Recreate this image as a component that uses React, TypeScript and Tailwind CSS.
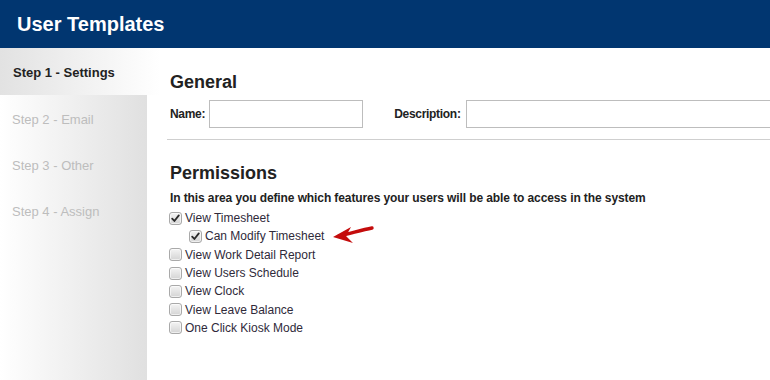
import React from 'react';

const STEPS = ['Step 2 - Email', 'Step 3 - Other', 'Step 4 - Assign'];

const PERMS = [
  { label: 'View Timesheet', checked: true, indent: false },
  { label: 'Can Modify Timesheet', checked: true, indent: true },
  { label: 'View Work Detail Report', checked: false, indent: false },
  { label: 'View Users Schedule', checked: false, indent: false },
  { label: 'View Clock', checked: false, indent: false },
  { label: 'View Leave Balance', checked: false, indent: false },
  { label: 'One Click Kiosk Mode', checked: false, indent: false },
];

function Box({ checked }: { checked: boolean }) {
  return (
    <span className="relative inline-flex items-center justify-center w-[13px] h-[13px] rounded-[3px] border border-[#a9a9a9] bg-gradient-to-b from-[#f4f4f4] to-[#d4d4d4] shadow-[inset_0_0_0_1px_rgba(255,255,255,0.6)]">
      {checked && (
        <svg width="9" height="9" viewBox="0 0 9 9">
          <path d="M1.2 4.6 L3.4 7 L7.8 1.4" fill="none" stroke="#2b2b2b" strokeWidth="1.8" strokeLinecap="round" strokeLinejoin="round" />
        </svg>
      )}
    </span>
  );
}

export default function App() {
  return (
    <div className="w-[770px] h-[380px] overflow-hidden bg-white flex flex-col" style={{ fontFamily: '"Liberation Sans", Arial, sans-serif' }}>
      {/* Header */}
      <div className="h-[48px] shrink-0 bg-[#013670] flex items-center px-[17px]">
        <span className="text-white font-bold text-[20px]">User Templates</span>
      </div>

      <div className="flex flex-1">
        {/* Sidebar */}
        <div className="w-[147px] shrink-0 flex flex-col">
          <div className="h-[47px] w-[160px] flex items-center pl-[13px] pt-[2px] bg-gradient-to-r from-[#e2e2e2] to-white">
            <span className="text-[13px] font-bold text-[#222]">Step 1 - Settings</span>
          </div>
          <div className="flex-1 pt-[2px] bg-gradient-to-r from-white to-[#e0e0e0]">
            {STEPS.map(s => (
              <div key={s} className="h-[46px] flex items-center pl-[12px] text-[13px] text-[#bdbdbd]">{s}</div>
            ))}
          </div>
        </div>

        {/* Content */}
        <div className="flex-1 pt-[23px] pl-[20px]">
          <div className="pl-[3px] text-[18px] font-bold text-[#222] leading-[22px]">General</div>
          <div className="flex items-center mt-[7px] pl-[3px] text-[12px] font-bold text-[#222] tracking-[-0.3px]">
            <span>Name:</span>
            <span className="ml-[4px] w-[154px] h-[28px] border border-[#bdbdbd] bg-white" />
            <span className="ml-[31px]">Description:</span>
            <span className="ml-[5px] w-[320px] h-[28px] border border-[#bdbdbd] bg-white" />
          </div>
          <div className="mt-[11px] h-px bg-[#cfcfcf]" />

          <div className="mt-[22px] pl-[3px] text-[18px] font-bold text-[#222] leading-[22px]">Permissions</div>
          <div className="mt-[6px] pl-[3px] text-[12px] font-bold text-[#222] leading-[16px] tracking-[-0.1px]">
            In this area you define which features your users will be able to access in the system
          </div>
          <div className="relative mt-[3px] pl-[2px]">
            {PERMS.map(p => (
              <div key={p.label} className={`h-[18.3px] flex items-center gap-[3px] text-[12px] text-[#2f2a3a] ${p.indent ? 'pl-[20px]' : ''}`}>
                <Box checked={p.checked} />
                <span>{p.label}</span>
              </div>
            ))}
            {/* red pointer arrow */}
            <svg className="absolute left-[165px] top-[15px]" width="44" height="22" viewBox="0 0 44 22">
              <path d="M40 4 C30 6 20 9 7 12" fill="none" stroke="#c40c0c" strokeWidth="3.4" strokeLinecap="round" />
              <path d="M1 13 L19 3 L14 12 L21 19 Z" fill="#c40c0c" />
            </svg>
          </div>
        </div>
      </div>
    </div>
  );
}
